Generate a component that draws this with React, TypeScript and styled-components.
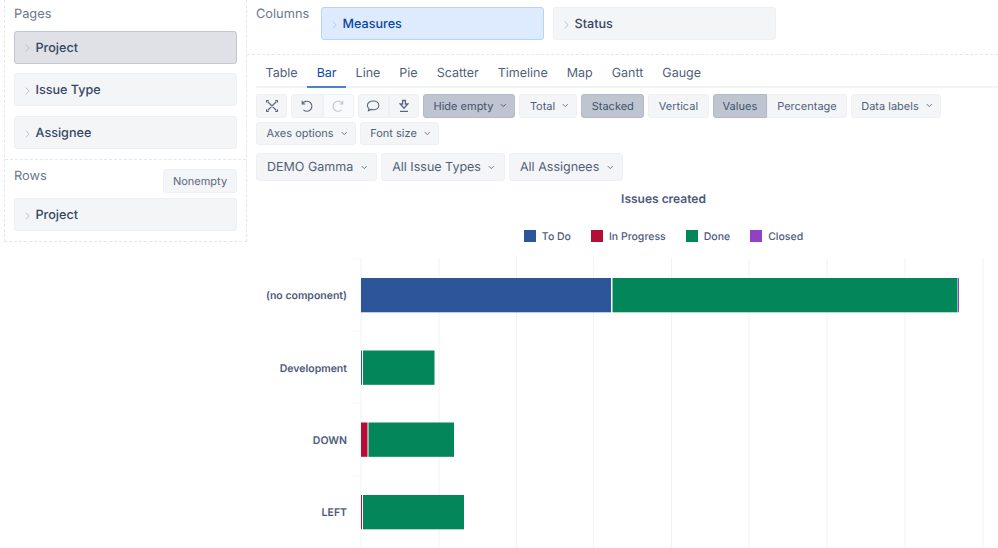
import { createGlobalStyle, styled } from "styled-components";

const Global = createGlobalStyle`
  html, body {
    margin: 0;
    padding: 0;
    background: #fff;
    overflow: hidden;
    font-family: Inter, "Liberation Sans", sans-serif;
    text-rendering: geometricPrecision;
  }
`;

const Chevron = () => (
  <svg width="6.5" height="7" viewBox="0 0 7 7" fill="none" stroke="currentColor" strokeWidth="0.9">
    <path d="M0.8 2 L3.5 4.7 L6.2 2" />
  </svg>
);

const ItemArrow = ({ color }: { color: string }) => (
  <svg width="5" height="8" viewBox="0 0 5 8" fill="none" stroke={color} strokeWidth="0.9">
    <path d="M0.8 0.6 L4.2 4 L0.8 7.4" />
  </svg>
);

function Dropdown({ label, active }: { label: string; active?: boolean }) {
  return (
    <ToolBtn $active={active}>
      {label}
      <Chevron />
    </ToolBtn>
  );
}

function Item({ label, state }: { label: string; state?: "selected" | "blue" }) {
  return (
    <Pill $state={state}>
      <ItemArrow color={state === "blue" ? "#a9c9f5" : "#b4bac6"} />
      {label}
    </Pill>
  );
}

const tabs = ["Table", "Bar", "Line", "Pie", "Scatter", "Timeline", "Map", "Gantt", "Gauge"];
const legend = [
  { label: "To Do", color: "#2d5599" },
  { label: "In Progress", color: "#b30f36" },
  { label: "Done", color: "#02865a" },
  { label: "Closed", color: "#8f43c4" },
];
const gridX = [361, 439, 516.5, 593.5, 671.5, 749, 827, 905, 983];
const rows = [
  {
    name: "(no component)",
    y: 278,
    parts: [
      { x: 361, w: 250, c: "#2d5599" },
      { x: 612.5, w: 345, c: "#02865a" },
      { x: 958, w: 1, c: "#8f43c4" },
    ],
  },
  {
    name: "Development",
    y: 350.5,
    parts: [
      { x: 361, w: 1, c: "#2d5599" },
      { x: 363, w: 71.5, c: "#02865a" },
    ],
  },
  {
    name: "DOWN",
    y: 422.5,
    parts: [
      { x: 361, w: 6.5, c: "#b30f36" },
      { x: 368.5, w: 85.5, c: "#02865a" },
    ],
  },
  {
    name: "LEFT",
    y: 495,
    parts: [
      { x: 361, w: 1, c: "#b30f36" },
      { x: 363, w: 101, c: "#02865a" },
    ],
  },
];

export default function App() {
  return (
    <Page>
      <Global />
      <Side>
        <PagesBox>
          <Label>Pages</Label>
          <Item label="Project" state="selected" />
          <Item label="Issue Type" />
          <Item label="Assignee" />
        </PagesBox>
        <RowsBox>
          <RowsHead>
            <Label>Rows</Label>
            <SmallBtn>Nonempty</SmallBtn>
          </RowsHead>
          <Item label="Project" />
        </RowsBox>
      </Side>
      <Main>
        <Columns>
          <ColumnsLabel>Columns</ColumnsLabel>
          <ColumnSlot>
            <Item label="Measures" state="blue" />
          </ColumnSlot>
          <ColumnSlot>
            <Item label="Status" />
          </ColumnSlot>
        </Columns>
        <Tabs>
          {tabs.map((t) => (
            <Tab key={t} $active={t === "Bar"}>
              {t}
            </Tab>
          ))}
        </Tabs>
        <Toolbar>
          <Group>
            <IconBtn $w={31}>
              <svg width="14" height="14" viewBox="0 0 14 14" fill="none" stroke="#5b6780" strokeWidth="1.1">
                <path d="M3 3 L11 11 M11 3 L3 11 M1.6 3.8 V1.6 H3.8 M10.2 1.6 H12.4 V3.8 M1.6 10.2 V12.4 H3.8 M12.4 10.2 V12.4 H10.2" />
              </svg>
            </IconBtn>
          </Group>
          <Group>
            <IconBtn $w={31.5}>
              <svg width="14" height="14" viewBox="0 0 14 14" fill="none" stroke="#5b6780" strokeWidth="1.1">
                <path d="M2.2 1.8 V5 H5.4 M2.4 5 A5 5 0 1 1 3.4 10.8" />
              </svg>
            </IconBtn>
            <IconBtn $w={31.5} $disabled>
              <svg width="14" height="14" viewBox="0 0 14 14" fill="none" stroke="#c3c8d2" strokeWidth="1.1">
                <path d="M11.8 1.8 V5 H8.6 M11.6 5 A5 5 0 1 0 10.6 10.8" />
              </svg>
            </IconBtn>
          </Group>
          <Group>
            <IconBtn $w={30.5}>
              <svg width="14" height="14" viewBox="0 0 14 14" fill="none" stroke="#5b6780" strokeWidth="1.1">
                <path d="M7.4 2 C4 2 1.4 3.9 1.4 6.4 C1.4 7.6 2 8.7 3 9.4 L2.4 11.8 L5.2 10.4 C5.9 10.6 6.6 10.7 7.4 10.7 C10.6 10.7 12.8 8.8 12.8 6.4 C12.8 3.9 10.6 2 7.4 2 Z" />
              </svg>
            </IconBtn>
            <IconBtn $w={30.5}>
              <svg width="14" height="14" viewBox="0 0 14 14" fill="none" stroke="#5b6780" strokeWidth="1.1">
                <path d="M5.6 1.5 H8.4 V5 H10.8 L7 9.2 L3.2 5 H5.6 Z M3 12.3 H11" strokeWidth="1.3" />
              </svg>
            </IconBtn>
          </Group>
          <Dropdown label="Hide empty" active />
          <Dropdown label="Total" />
          <ToolBtn $active>Stacked</ToolBtn>
          <ToolBtn>Vertical</ToolBtn>
          <Group>
            <ToolBtn $active $joined>
              Values
            </ToolBtn>
            <ToolBtn $joined>Percentage</ToolBtn>
          </Group>
          <Dropdown label="Data labels" />
          <Dropdown label="Axes options" />
          <Dropdown label="Font size" />
        </Toolbar>
        <Filters>
          {["DEMO Gamma", "All Issue Types", "All Assignees"].map((f) => (
            <FilterBtn key={f}>
              {f}
              <Chevron />
            </FilterBtn>
          ))}
        </Filters>
        <ChartTitle>Issues created</ChartTitle>
        <Legend>
          {legend.map((l) => (
            <LegendItem key={l.label}>
              <Swatch $color={l.color} />
              {l.label}
            </LegendItem>
          ))}
        </Legend>
        <Chart>
          <svg width="751" height="290" viewBox="247 258 751 290">
            {gridX.map((x) => (
              <line key={x} x1={x} x2={x} y1={258} y2={548} stroke="#f1f2f5" strokeWidth="1" />
            ))}
            {[258, 331, 403, 476].map((y) => (
              <line key={y} x1={352} x2={361} y1={y} y2={y} stroke="#f3f4f6" strokeWidth="1" />
            ))}
            {rows.map((r) => (
              <g key={r.name}>
                <text
                  x={347}
                  y={r.y + 21}
                  textAnchor="end"
                  fontFamily="Inter, 'Liberation Sans', sans-serif"
                  fontSize="10.5"
                  fontWeight="600"
                  fill="#4d5b7c"
                >
                  {r.name}
                </text>
                {r.parts.map((p) => (
                  <rect key={p.x} x={p.x} y={r.y} width={p.w} height={34.3} fill={p.c} />
                ))}
              </g>
            ))}
          </svg>
        </Chart>
      </Main>
    </Page>
  );
}

const Page = styled.div`
  display: flex;
  width: 998px;
  height: 548px;
  overflow: hidden;
  color: #505f79;
`;

const Side = styled.div`
  width: 243px;
  margin-left: 4px;
  height: 242px;
  box-sizing: border-box;
  border: 1px dashed #e4e7ec;
  border-top: none;
  flex: none;
`;

const PagesBox = styled.div`
  display: flex;
  flex-direction: column;
  gap: 9.7px;
  padding: 5px 9px 9px 9px;
  height: 160px;
  box-sizing: border-box;
  border-bottom: 1px dashed #e4e7ec;
`;

const RowsBox = styled.div`
  padding: 7px 9px 0 9px;
`;

const RowsHead = styled.div`
  display: flex;
  justify-content: space-between;
  align-items: flex-start;
  height: 30px;
  margin-bottom: 1px;
`;

const Label = styled.div`
  font-size: 12.8px;
  line-height: 16px;
  padding-top: 2px;
  margin-bottom: -2px;
  color: #6b778c;
`;

const SmallBtn = styled.div`
  margin-top: 2px;
  width: 74px;
  height: 24px;
  display: flex;
  align-items: center;
  justify-content: center;
  font-size: 11px;
  background: #f4f5f7;
  border: 1px solid #eef0f3;
  border-radius: 3px;
  box-sizing: border-box;
  color: #5b6780;
`;

const Pill = styled.div<{ $state?: "selected" | "blue" }>`
  display: flex;
  align-items: center;
  gap: 6px;
  height: 33px;
  width: 100%;
  flex: none;
  box-sizing: border-box;
  padding: 2px 0 0 9.5px;
  border-radius: 3px;
  font-size: 12.6px;
  font-weight: 500;
  background: ${(p) => (p.$state === "selected" ? "#dfe1e6" : p.$state === "blue" ? "#deebff" : "#f4f5f7")};
  border: 1px solid ${(p) => (p.$state === "selected" ? "#c1c7d0" : p.$state === "blue" ? "#b3d4ff" : "#eef0f3")};
  color: ${(p) => (p.$state === "blue" ? "#0a44a5" : "#344563")};
`;

const Main = styled.div`
  flex: 1;
  min-width: 0;
  display: flex;
  flex-direction: column;
`;

const Columns = styled.div`
  display: flex;
  height: 55px;
  flex: none;
  box-sizing: border-box;
  padding: 7px 0 0 9px;
  border-bottom: 1px dashed #e4e7ec;
`;

const ColumnsLabel = styled.div`
  width: 65px;
  font-size: 12.8px;
  line-height: 14px;
  padding-top: 1px;
  color: #6b778c;
`;

const ColumnSlot = styled.div`
  width: 223px;
  margin-right: 9px;
`;

const Tabs = styled.div`
  display: flex;
  margin: 5px 0 0 9px;
  height: 28px;
  flex: none;
  border-bottom: 2px solid #f2f3f5;
  box-sizing: border-box;
`;

const Tab = styled.div<{ $active?: boolean }>`
  padding: 1px 9.5px 0;
  height: 28px;
  box-sizing: border-box;
  display: flex;
  align-items: center;
  font-size: 12.5px;
  color: ${(p) => (p.$active ? "#0a4aa8" : "#505f79")};
  border-bottom: 2px solid ${(p) => (p.$active ? "#4c82cc" : "transparent")};
`;

const Toolbar = styled.div`
  display: flex;
  flex-wrap: wrap;
  gap: 4px;
  margin: 6px 0 0 9px;
  width: 700px;
`;

const Group = styled.div`
  display: flex;
`;

const ToolBtn = styled.div<{ $active?: boolean; $joined?: boolean }>`
  display: flex;
  align-items: center;
  gap: 7px;
  height: 23.5px;
  box-sizing: border-box;
  padding: 0 ${(p) => (p.$joined ? "9px" : "9.5px")};
  font-size: 11px;
  border-radius: ${(p) => (p.$joined ? "0" : "3px")};
  background: ${(p) => (p.$active ? "#bec5d0" : "#f4f5f7")};
  border: 1px solid ${(p) => (p.$active ? "#b3bac6" : "#eef0f3")};
  color: ${(p) => (p.$active ? "#42526e" : "#505f79")};

  svg {
    margin-right: -2px;
  }
  &:first-child {
    border-top-left-radius: 3px;
    border-bottom-left-radius: 3px;
  }
  &:last-child {
    border-top-right-radius: 3px;
    border-bottom-right-radius: 3px;
  }
`;

const IconBtn = styled.div<{ $w: number; $disabled?: boolean }>`
  width: ${(p) => p.$w}px;
  height: 23.5px;
  box-sizing: border-box;
  display: flex;
  align-items: center;
  justify-content: center;
  background: ${(p) => (p.$disabled ? "#f9fafb" : "#f4f5f7")};
  border: 1px solid #eef0f3;

  &:first-child {
    border-radius: 3px 0 0 3px;
  }
  &:last-child {
    border-radius: 0 3px 3px 0;
  }
  &:only-child {
    border-radius: 3px;
  }
`;

const Filters = styled.div`
  display: flex;
  gap: 4px;
  margin: 8px 0 0 9px;
`;

const FilterBtn = styled.div`
  display: flex;
  align-items: center;
  gap: 7.5px;
  height: 28px;
  box-sizing: border-box;
  padding: 1px 9px 0 10px;
  font-size: 12.5px;
  background: #f4f5f7;
  border: 1px solid #eef0f3;
  border-radius: 3px;
  color: #505f79;
`;

const ChartTitle = styled.div`
  text-align: center;
  margin: 10px 0 0 82px;
  font-size: 12px;
  line-height: 16px;
  font-weight: 600;
  color: #4d5b7c;
`;

const Legend = styled.div`
  display: flex;
  justify-content: center;
  gap: 20px;
  margin: 22px 0 0 82px;
  height: 14px;
`;

const LegendItem = styled.div`
  display: flex;
  align-items: center;
  gap: 6px;
  font-size: 10.5px;
  font-weight: 500;
  color: #4d5b7c;
`;

const Swatch = styled.span<{ $color: string }>`
  width: 12px;
  height: 12px;
  background: ${(p) => p.$color};
`;

const Chart = styled.div`
  margin-top: 15px;
  flex: none;
  line-height: 0;
`;
